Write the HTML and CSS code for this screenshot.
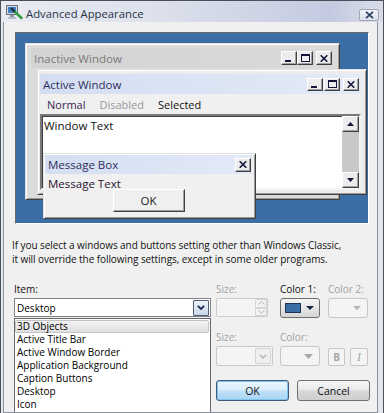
FILE: index.html
```html
<!DOCTYPE html>
<html>
<head>
<meta charset="utf-8">
<title>Advanced Appearance</title>
<link rel="stylesheet" href="styles.css">
</head>
<body>
<div class="dialog">
  <div class="titlebar">
    <svg class="app-icon" width="18" height="18" viewBox="0 0 18 18">
      <rect x="1.5" y="2.5" width="11" height="9" fill="#d4dae4" stroke="#687080"/>
      <rect x="3" y="4" width="8" height="6" fill="#3f7fc4"/>
      <rect x="5" y="12" width="4" height="2" fill="#8e96a4"/>
      <rect x="3" y="14" width="8" height="2" fill="#b8bec8"/>
      <line x1="9" y1="8" x2="16.5" y2="15" stroke="#2f9c3c" stroke-width="2.4" stroke-linecap="round"/>
      <line x1="6.5" y1="5.5" x2="9" y2="8" stroke="#1f2a3a" stroke-width="2.2" stroke-linecap="round"/>
    </svg>
    <span class="title">Advanced Appearance</span>
    <div class="tb-close">
      <svg width="9" height="8" viewBox="0 0 9 8"><path d="M1 0.8 L8 7.2 M8 0.8 L1 7.2" stroke="#2c3e62" stroke-width="1.7"/></svg>
    </div>
  </div>

  <div class="client">
    <div class="preview">
      <div class="win inactive">
        <div class="caption cap-inactive">
          <span class="cap-title">Inactive Window</span>
          <div class="cbtns">
            <div class="cbtn"><svg width="8" height="7" viewBox="0 0 8 7"><rect x="0" y="5" width="6" height="2" fill="#15153c"/></svg></div>
            <div class="cbtn"><svg width="9" height="8" viewBox="0 0 9 8"><rect x="0.5" y="0.5" width="8" height="7" fill="none" stroke="#15153c"/><rect x="0" y="0" width="9" height="2" fill="#15153c"/></svg></div>
            <div class="cbtn close"><svg width="8" height="7" viewBox="0 0 8 7"><path d="M0.7 0.3 L7.3 6.7 M7.3 0.3 L0.7 6.7" stroke="#15153c" stroke-width="1.6"/></svg></div>
          </div>
        </div>
      </div>

      <div class="win active">
        <div class="caption cap-active">
          <span class="cap-title">Active Window</span>
          <div class="cbtns">
            <div class="cbtn"><svg width="8" height="7" viewBox="0 0 8 7"><rect x="0" y="5" width="6" height="2" fill="#15153c"/></svg></div>
            <div class="cbtn"><svg width="9" height="8" viewBox="0 0 9 8"><rect x="0.5" y="0.5" width="8" height="7" fill="none" stroke="#15153c"/><rect x="0" y="0" width="9" height="2" fill="#15153c"/></svg></div>
            <div class="cbtn close"><svg width="8" height="7" viewBox="0 0 8 7"><path d="M0.7 0.3 L7.3 6.7 M7.3 0.3 L0.7 6.7" stroke="#15153c" stroke-width="1.6"/></svg></div>
          </div>
        </div>
        <div class="menubar">
          <span class="m-normal">Normal</span>
          <span class="m-disabled">Disabled</span>
          <span class="m-selected">Selected</span>
        </div>
        <div class="textarea">
          <div class="wtext">Window Text</div>
          <div class="scrollbar">
            <div class="sbtn"><svg width="7" height="4" viewBox="0 0 7 4"><polygon points="0,4 7,4 3.5,0" fill="#15153c"/></svg></div>
            <div class="strack"></div>
            <div class="sbtn"><svg width="7" height="4" viewBox="0 0 7 4"><polygon points="0,0 7,0 3.5,4" fill="#15153c"/></svg></div>
          </div>
        </div>
      </div>

      <div class="win msgbox">
        <div class="caption cap-active cap-msg">
          <span class="cap-title">Message Box</span>
          <div class="cbtns">
            <div class="cbtn"><svg width="8" height="7" viewBox="0 0 8 7"><path d="M0.7 0.3 L7.3 6.7 M7.3 0.3 L0.7 6.7" stroke="#15153c" stroke-width="1.6"/></svg></div>
          </div>
        </div>
        <div class="msg-body">
          <div class="msg-text">Message Text</div>
          <div class="msg-ok">OK</div>
        </div>
      </div>
    </div>

    <div class="lower">
      <p class="desc">If you select a windows and buttons setting other than Windows Classic,<br>it will override the following settings, except in some older programs.</p>
      <div class="settings">
        <div class="item-col">
          <div class="lbl">Item:</div>
          <div class="combo-main">
            <span>Desktop</span>
            <div class="combo-arrow"><svg width="8" height="5" viewBox="0 0 8 5"><path d="M0.8 0.8 L4 4 L7.2 0.8" fill="none" stroke="#1d2d55" stroke-width="1.8"/></svg></div>
          </div>
          <ul class="list">
            <li class="sel">3D Objects</li>
            <li>Active Title Bar</li>
            <li>Active Window Border</li>
            <li>Application Background</li>
            <li>Caption Buttons</li>
            <li>Desktop</li>
            <li>Icon</li>
          </ul>
        </div>

        <div class="ctrl-col">
          <div class="crow">
            <span class="lbl dis">Size:</span>
            <span class="lbl">Color 1:</span>
            <span class="lbl dis">Color 2:</span>
          </div>
          <div class="crow ctl1">
            <div class="spin">
              <div class="spin-btns">
                <div class="spin-b"><svg width="7" height="4" viewBox="0 0 7 4"><path d="M0.5 3.5 L3.5 0.8 L6.5 3.5" fill="none" stroke="#b4b4b4" stroke-width="1"/></svg></div>
                <div class="spin-b"><svg width="7" height="4" viewBox="0 0 7 4"><path d="M0.5 0.5 L3.5 3.2 L6.5 0.5" fill="none" stroke="#b4b4b4" stroke-width="1"/></svg></div>
              </div>
            </div>
            <div class="colorbtn">
              <span class="swatch"></span>
              <svg width="8" height="4" viewBox="0 0 8 4"><polygon points="0,0 8,0 4,4" fill="#1a2448"/></svg>
            </div>
            <div class="colorbtn dis">
              <svg width="8" height="4" viewBox="0 0 8 4"><polygon points="0,0 8,0 4,4" fill="#b4b4b4"/></svg>
            </div>
          </div>
          <div class="crow lbl2">
            <span class="lbl dis">Size:</span>
            <span class="lbl dis">Color:</span>
            <span></span>
          </div>
          <div class="crow ctl2">
            <div class="dcombo">
              <div class="dcombo-arrow"><svg width="8" height="5" viewBox="0 0 8 5"><path d="M0.8 0.8 L4 4 L7.2 0.8" fill="none" stroke="#b4b4b4" stroke-width="1.4"/></svg></div>
            </div>
            <div class="colorbtn dis">
              <svg width="9" height="5" viewBox="0 0 9 5"><polygon points="0,0 9,0 4.5,5" fill="#a8a8a8"/></svg>
            </div>
            <div class="bi">
              <div class="fbtn b">B</div>
              <div class="fbtn i">I</div>
            </div>
          </div>
          <div class="btnrow">
            <div class="pbtn ok">OK</div>
            <div class="pbtn">Cancel</div>
          </div>
        </div>
      </div>
    </div>
  </div>
</div>
</body>
</html>
```
FILE: styles.css
```css
* { box-sizing: border-box; }
body { margin: 0; font-family: "Open Sans", "Noto Sans", sans-serif; color: #000; }

.dialog {
  width: 384px; height: 413px;
  border: 1px solid #4a4f58; border-bottom: 0;
  background: #e3e6ee;
  display: flex; flex-direction: column;
  overflow: hidden;
}
.titlebar {
  height: 21px; flex: none;
  display: flex; align-items: flex-start;
  background: linear-gradient(90deg, #e8ebf2 0%, #dde1ec 40%, #c9cfe3 78%, #c4cae0 86%, #d9dde9 100%);
}
.app-icon { margin: 2px 0 0 4px; flex: none; }
.title { margin: 5px 0 0 3px; font-size: 11.3px; line-height: 15px; color: #2b3346; }
.tb-close {
  margin: 8px 4px 0 auto; width: 20px; height: 12px;
  border: 1px solid #9ea6b8; border-radius: 2px;
  background: linear-gradient(#f0f2f7, #dde2ec);
  display: flex; align-items: center; justify-content: center;
}

.client {
  flex: 1; min-height: 0; overflow: hidden;
  margin: 0 5px 0 2px;
  border-left: 1px solid #8d929c; border-right: 1px solid #8d929c; border-bottom: 1px solid #8d929c;
  background: #f0f0f0;
  padding-top: 10px;
}

/* preview desktop */
.preview {
  position: relative;
  margin-left: 11px; width: 354px; height: 192px;
  border: 1px solid; border-color: #6a6a6a #ffffff #ffffff #6a6a6a;
  background: #3a6ea5;
  font-size: 11.5px;
}
.win {
  position: absolute;
  border: 1px solid; border-color: #e0e0e0 #404040 #404040 #e0e0e0;
  box-shadow: inset 1px 1px #ffffff, inset -1px -1px #9a9a9a;
  background: #ececec;
  display: flex; flex-direction: column;
}
.inactive { left: 9px; top: 10px; width: 315px; height: 157px; padding: 4px 5px 4px 5px; background: #dcdcdc; }
.active { left: 21px; top: 36px; width: 330px; height: 126px; padding: 4px 5px 4px 2px; }
.msgbox { left: 27px; top: 120px; width: 213px; height: 66px; padding: 1px 3px 4px 1px; background: #f0f0f0; }

.caption { height: 20px; flex: none; display: flex; align-items: center; padding-left: 3px; }
.cap-inactive { background: linear-gradient(90deg, #d3d3d3, #dadada); color: #7a7a7a; }
.cap-active { background: linear-gradient(90deg, #d4def1, #e3eaf8); color: #2e2e5e; }
.cap-msg { height: 19px; }
.cap-title { flex: 1; white-space: nowrap; }
.cbtns { display: flex; margin-right: 2px; }
.cbtn {
  width: 16px; height: 14px;
  background: #ececec;
  border: 1px solid; border-color: #ffffff #404040 #404040 #ffffff;
  box-shadow: inset -1px -1px #a0a0a0;
  display: flex; align-items: center; justify-content: center;
}
.cbtn.close { margin-left: 3px; }
.cap-active .cbtn { height: 13px; }
.cap-active .cbtn + .cbtn { margin-left: 1px; }
.cap-active .cbtn.close { margin-left: 3px; }
.cap-msg .cbtns { margin-right: 1px; }
.cap-msg .cbtn { height: 14px; }

.menubar { height: 20px; flex: none; display: flex; align-items: center; gap: 14px; padding-left: 7px; font-size: 11px; background: #f0f0f0; }
.m-normal { color: #3b1f52; }
.m-disabled { color: #9a9a9a; }
.m-selected { color: #111; }

.textarea {
  height: 76px; flex: none;
  display: flex;
  background: #fff;
  border: 2px solid; border-color: #7a7a7a #f4f4f4 #f4f4f4 #7a7a7a;
  box-shadow: inset 1px 1px #404040;
}
.wtext { flex: 1; padding: 3px 0 0 2px; line-height: 14px; color: #111; }
.scrollbar { width: 17px; display: flex; flex-direction: column; background: #c8c8c8; }
.sbtn {
  height: 16px; flex: none;
  background: #ececec;
  border: 1px solid; border-color: #ffffff #404040 #404040 #ffffff;
  box-shadow: inset -1px -1px #a0a0a0;
  display: flex; align-items: center; justify-content: center;
}
.strack { flex: 1; }

.msg-body { display: flex; flex-direction: column; }
.msg-text { margin-top: 3px; padding-left: 3px; line-height: 14px; color: #2a1030; }
.msg-ok {
  align-self: center; margin-top: -2px;
  width: 72px; height: 23px;
  background: #efefef;
  border: 1px solid; border-color: #ffffff #404040 #404040 #ffffff;
  box-shadow: inset -1px -1px #a0a0a0;
  display: flex; align-items: center; justify-content: center;
  color: #222;
}

/* lower */
.lower { padding-left: 8px; }
.desc { margin: 14px 0 0; font-size: 10px; line-height: 14px; color: #111; white-space: nowrap; letter-spacing: -0.07px; }
.settings { display: flex; margin-top: 16px; }
.lbl { font-size: 10px; line-height: 14px; height: 14px; color: #111; white-space: nowrap; }
.lbl.dis { color: #a2a2a2; }

.item-col { margin-left: 2px; width: 197px; flex: none; }
.combo-main {
  margin-top: 2px; height: 19px;
  border: 1px solid #7f8185; background: #fff;
  display: flex; align-items: center;
  padding-left: 2px; font-size: 10px;
}
.combo-arrow {
  margin-left: auto; margin-right: 1px;
  width: 16px; height: 16px;
  border: 1px solid #4e5d74; border-radius: 1px;
  background: linear-gradient(#eef3f9, #c9d7e8);
  display: flex; align-items: center; justify-content: center;
}
.list {
  list-style: none; margin: 1px 0 0; padding: 1px 0 0;
  height: 94px; overflow: hidden;
  border: 1px solid #65676c; border-bottom: 0;
  background: #fff;
  font-size: 10px; line-height: 13px;
}
.list li { height: 13px; padding-left: 2px; white-space: nowrap; }
.list li.sel {
  margin: 0 1px 0 0; padding-left: 1px;
  border: 1px solid #c4c4c4; border-radius: 2px;
  line-height: 11px;
  background: linear-gradient(#f4f4f4, #dedede);
}

.ctrl-col { margin-left: 5px; width: 156px; }
.crow { display: grid; grid-template-columns: 64px 48px 40px; align-items: start; }
.ctl1 { margin-top: 2px; height: 20px; }
.lbl2 { margin-top: 12px; }
.ctl2 { margin-top: 2px; height: 20px; }

.spin {
  width: 52px; height: 19px;
  border: 1px solid #cbcbcb; border-radius: 2px;
  background: #f4f4f4;
  display: flex; justify-content: flex-end;
}
.spin-btns { width: 12px; display: flex; flex-direction: column; }
.spin-b {
  flex: 1; border: 1px solid #d6d6d6; border-radius: 1px;
  display: flex; align-items: center; justify-content: center;
  background: #f2f2f2;
}
.colorbtn {
  width: 40px; height: 20px;
  border: 1px solid #6d6d6d; border-radius: 3px;
  background: linear-gradient(#f5f5f5, #e6e6e6 50%, #d6d6d6);
  display: flex; align-items: center; justify-content: flex-end;
  padding-right: 5px; gap: 5px;
}
.swatch {
  width: 16px; height: 10px;
  background: #3a6ea5; border: 1px solid #1d3557;
}
.colorbtn.dis { border-color: #c6c6c6; background: #f4f4f4; padding-right: 6px; }
.dcombo {
  width: 57px; height: 20px;
  border: 1px solid #c9c9c9; border-radius: 2px;
  background: #f4f4f4;
  display: flex; justify-content: flex-end; align-items: center;
  padding-right: 1px;
}
.dcombo-arrow {
  width: 16px; height: 16px;
  border: 1px solid #d4d4d4; border-radius: 2px;
  background: #efefef;
  display: flex; align-items: center; justify-content: center;
}
.bi { display: flex; gap: 5px; margin-top: 2px; }
.fbtn {
  height: 18px;
  border: 1px solid #c6c6c6; border-radius: 2px;
  background: #f4f4f4;
  color: #a6a6a6;
  display: flex; align-items: center; justify-content: center;
}
.fbtn.b { width: 17px; font-weight: bold; font-size: 10px; }
.fbtn.i { width: 18px; font-family: "Liberation Serif", serif; font-style: italic; font-size: 12px; }

.btnrow { display: flex; gap: 8px; margin-top: 14px; }
.pbtn {
  width: 73px; height: 21px;
  border: 1px solid #707070; border-radius: 3px;
  background: linear-gradient(#f6f6f6 0%, #e9e9e9 48%, #d8d8d8 52%, #cfcfcf 100%);
  display: flex; align-items: center; justify-content: center;
  font-size: 10.5px; color: #111;
}
.pbtn.ok {
  border-color: #3d5b7a;
  background: linear-gradient(#eaf5fd 0%, #d9eefb 48%, #bfe1f7 52%, #a7d4f3 100%);
  box-shadow: inset 0 0 0 1px #7fc4ef;
}
```
